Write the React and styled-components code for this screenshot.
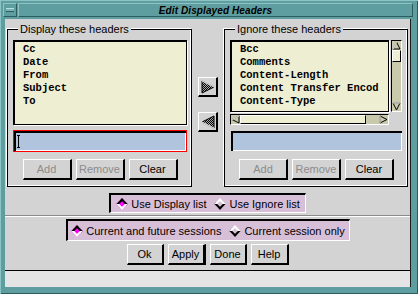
import React from 'react';
import styled, { createGlobalStyle } from 'styled-components';

const TEAL = '#5f9ea0';
const GRAY = '#d3d3d3';
const LIST_BG = '#eeeed2';
const TROUGH = '#c9c9ac';

const GlobalStyle = createGlobalStyle`
  html, body { margin: 0; padding: 0; background: ${TEAL}; }
  body { font-family: "Liberation Sans", Arial, sans-serif; font-size: 11px; color: #000; }
`;

const Frame = styled.div`
  width: 418px;
  height: 294px;
  box-sizing: border-box;
  background: ${TEAL};
  padding: 3px 5px 7px 3px;
  display: flex;
  flex-direction: column;
  gap: 2px;
  box-shadow: inset 1px 1px 0 #8cc4c6, inset -1px -1px 0 #2c5c5e;
`;

const TitleRow = styled.div`
  display: flex;
  height: 14px;
  gap: 1px;
`;

const MenuButton = styled.div`
  width: 14px;
  box-sizing: border-box;
  border-top: 1px solid #8cc4c6;
  border-left: 1px solid #8cc4c6;
  border-bottom: 1px solid #2c5c5e;
  border-right: 1px solid #2c5c5e;
  display: flex;
  align-items: center;
  justify-content: center;

  &::after {
    content: '';
    width: 8px;
    height: 2px;
    background: #7ab4b6;
    border-top: 1px solid #b4e0e2;
    border-bottom: 1px solid #2c5c5e;
  }
`;

const TitleBar = styled.div`
  flex: 1;
  box-sizing: border-box;
  border-top: 1px solid #8cc4c6;
  border-left: 1px solid #8cc4c6;
  border-bottom: 1px solid #2c5c5e;
  border-right: 1px solid #2c5c5e;
  display: flex;
  align-items: center;
  justify-content: center;
  font-style: italic;
  font-weight: bold;
  font-size: 10px;
  letter-spacing: 0.1px;
`;

const Body = styled.div`
  flex: 1;
  margin: 0 2px 0 2px;
  background: ${GRAY};
  display: flex;
  flex-direction: column;
  border-right: 1px solid #1c1c1c;
`;

const Main = styled.div`
  flex: 1;
  padding: 4px 2px 0 2px;
  display: flex;
  flex-direction: column;
  align-items: center;
`;

const TopRow = styled.div`
  display: flex;
  align-self: stretch;
`;

const Group = styled.div`
  position: relative;
  width: ${p => p.$w}px;
  margin-top: 6px;
  box-sizing: border-box;
  border: 1px solid #000;
  box-shadow: -1px -1px 0 #fff, inset -1px -1px 0 #fff;
  padding: 10px 4px 6px 5px;
  display: flex;
  flex-direction: column;
`;

const Legend = styled.span`
  position: absolute;
  top: -7px;
  left: 10px;
  padding: 0 2px;
  background: ${GRAY};
  line-height: 13px;
  white-space: nowrap;
`;

const ListBox = styled.div`
  height: 85px;
  box-sizing: border-box;
  background: ${LIST_BG};
  border: 1px solid #000;
  box-shadow: inset 1px 1px 0 #000, 1px 1px 0 #fff;
  padding: 2px 0 0 9px;
  font-family: "Liberation Mono", "Courier New", monospace;
  font-size: 10.5px;
  font-weight: bold;
  overflow: hidden;
`;

const ListRow = styled.div`
  line-height: 13px;
  height: 13px;
  white-space: nowrap;
`;

const ScrollGrid = styled.div`
  display: grid;
  grid-template-columns: 1fr 11px;
  grid-template-rows: 72px 11px;
  gap: 2px;
  margin-right: 1px;
  & > ${ListBox} { height: 72px; }
`;

const VScroll = styled.div`
  background: ${TROUGH};
  border-top: 1px solid #000;
  border-left: 1px solid #000;
  border-right: 1px solid #fff;
  border-bottom: 1px solid #fff;
  display: flex;
  flex-direction: column;
  align-items: stretch;
`;

const HScroll = styled.div`
  background: ${TROUGH};
  border-top: 1px solid #000;
  border-left: 1px solid #000;
  border-right: 1px solid #fff;
  border-bottom: 1px solid #fff;
  display: flex;
  align-items: stretch;
`;

const ScrollArrow = styled.div`
  width: ${p => p.$horiz ? '9px' : 'auto'};
  height: ${p => p.$horiz ? 'auto' : '9px'};
  display: flex;
  align-items: center;
  justify-content: center;
`;

const Thumb = styled.div`
  background: ${LIST_BG};
  border-right: 1px solid #000;
  border-bottom: 1px solid #000;
  border-top: 1px solid #fff;
  border-left: 1px solid #fff;
  ${p => p.$horiz ? 'width: 124px;' : 'height: 10px;'}
`;

const Spacer = styled.div`
  flex: 1;
`;

const TextInput = styled.div`
  height: 22px;
  margin-top: 5px;
  box-sizing: border-box;
  border: 1px solid ${p => p.$focused ? '#ff0000' : GRAY};
  background: #b0c4de;
  box-shadow: inset 2px 2px 0 #000, inset -1px -1px 0 #fff;
  display: flex;
  align-items: center;
  padding-left: 4px;
`;

const Caret = styled.span`
  position: relative;
  width: 1px;
  height: 13px;
  background: #000;
  &::before, &::after {
    content: '';
    position: absolute;
    left: -1px;
    width: 3px;
    height: 1px;
    background: #000;
  }
  &::before { top: 0; }
  &::after { bottom: 0; }
`;

const ButtonRow = styled.div`
  display: flex;
  justify-content: center;
  gap: 4px;
  margin-top: ${p => p.$mt ?? 7}px;
`;

const Button = styled.div`
  width: ${p => p.$w || 49}px;
  height: 21px;
  box-sizing: border-box;
  border-top: 1px solid #fff;
  border-left: 1px solid #fff;
  border-bottom: 2px solid #000;
  border-right: ${p => p.$default ? 3 : 2}px solid #000;
  display: flex;
  align-items: center;
  justify-content: center;
  color: ${p => p.$disabled ? '#8c8c8c' : '#000'};
`;

const MiddleColumn = styled.div`
  width: 32px;
  display: flex;
  flex-direction: column;
  align-items: center;
  padding-top: 54px;
  gap: 15px;
`;

const ArrowButton = styled.div`
  width: 20px;
  height: 20px;
  box-sizing: border-box;
  border-top: 1px solid #fff;
  border-left: 1px solid #fff;
  border-bottom: 2px solid #000;
  border-right: 2px solid #000;
  display: flex;
  align-items: center;
  justify-content: center;
`;

const RadioBox = styled.div`
  display: flex;
  align-items: center;
  justify-content: center;
  gap: ${p => p.$gap}px;
  width: ${p => p.$w}px;
  height: ${p => p.$h}px;
  margin-top: ${p => p.$mt}px;
  box-sizing: border-box;
  background: #d8bfd8;
  border-top: 2px solid #000;
  border-left: 2px solid #000;
  border-bottom: 1px solid #fff;
  border-right: 1px solid #fff;
`;

const RadioItem = styled.div`
  display: flex;
  align-items: center;
  gap: 4px;
  white-space: nowrap;
`;

const Diamond = styled.span`
  width: 8px;
  height: 8px;
  box-sizing: border-box;
  transform: rotate(45deg);
  background: ${p => p.$on ? '#ff00ff' : '#d8bfd8'};
  border-top: 2px solid ${p => p.$on ? '#000' : '#fff'};
  border-left: 2px solid ${p => p.$on ? '#000' : '#fff'};
  border-bottom: 2px solid ${p => p.$on ? '#fff' : '#000'};
  border-right: 2px solid ${p => p.$on ? '#fff' : '#000'};
  margin: 0 1px 0 2px;
`;

const Separator = styled.div`
  align-self: stretch;
  height: 0;
  margin: 2px -2px 0 -2px;
  border-top: 1px solid #8a8a8a;
  border-bottom: 1px solid #fff;
`;

const BottomStrip = styled.div`
  height: 16px;
  border-top: 1px solid #000;
  background: #e4e4e4;
`;

function Stipple({ dir }) {
  const pts = dir === 'right' ? '1,1 13,7 1,13' : '13,1 1,7 13,13';
  const id = `chk-${dir}`;
  return (
    <svg width="14" height="14" viewBox="0 0 14 14">
      <defs>
        <pattern id={id} width="2" height="2" patternUnits="userSpaceOnUse">
          <rect width="2" height="2" fill="#a8a8a8" />
          <rect width="1" height="1" fill="#000" />
          <rect x="1" y="1" width="1" height="1" fill="#000" />
        </pattern>
      </defs>
      <polygon points={pts} fill={`url(#${id})`} stroke="#000" strokeWidth="1" />
      {dir === 'right'
        ? <line x1="1" y1="1" x2="13" y2="7" stroke="#fff" strokeWidth="1" />
        : <line x1="1" y1="7" x2="13" y2="13" stroke="#fff" strokeWidth="1" />}
    </svg>
  );
}

function SmallArrow({ dir }) {
  const shapes = {
    up: { pts: '4.5,1 8,8 1,8', lt: '1,8 4.5,1' },
    down: { pts: '1,1 8,1 4.5,8', lt: '1,1 8,1' },
    left: { pts: '1,4.5 8,1 8,8', lt: '1,4.5 8,1' },
    right: { pts: '1,1 8,4.5 1,8', lt: '1,8 1,1' },
  };
  const s = shapes[dir];
  return (
    <svg width="9" height="9" viewBox="0 0 9 9">
      <polygon points={s.pts} fill={TROUGH} stroke="#000" strokeWidth="1" />
      <polyline points={s.lt} fill="none" stroke="#fff" strokeWidth="1" />
    </svg>
  );
}

const displayed = ['Cc', 'Date', 'From', 'Subject', 'To'];
const ignored = ['Bcc', 'Comments', 'Content-Length', 'Content Transfer Encod', 'Content-Type'];

function EntryButtons() {
  return (
    <ButtonRow>
      <Button $disabled>Add</Button>
      <Button $disabled>Remove</Button>
      <Button>Clear</Button>
    </ButtonRow>
  );
}

export default function App() {
  return (
    <>
      <GlobalStyle />
      <Frame>
        <TitleRow>
          <MenuButton />
          <TitleBar>Edit Displayed Headers</TitleBar>
        </TitleRow>
        <Body>
          <Main>
            <TopRow>
              <Group $w={185}>
                <Legend>Display these headers</Legend>
                <ListBox>
                  {displayed.map(h => <ListRow key={h}>{h}</ListRow>)}
                </ListBox>
                <TextInput $focused><Caret /></TextInput>
                <EntryButtons />
              </Group>
              <MiddleColumn>
                <ArrowButton><Stipple dir="right" /></ArrowButton>
                <ArrowButton><Stipple dir="left" /></ArrowButton>
              </MiddleColumn>
              <Group $w={184}>
                <Legend>Ignore these headers</Legend>
                <ScrollGrid>
                  <ListBox>
                    {ignored.map(h => <ListRow key={h}>{h}</ListRow>)}
                  </ListBox>
                  <VScroll>
                    <ScrollArrow><SmallArrow dir="up" /></ScrollArrow>
                    <Thumb />
                    <Spacer />
                    <ScrollArrow><SmallArrow dir="down" /></ScrollArrow>
                  </VScroll>
                  <HScroll>
                    <ScrollArrow $horiz><SmallArrow dir="left" /></ScrollArrow>
                    <Thumb $horiz />
                    <Spacer />
                    <ScrollArrow $horiz><SmallArrow dir="right" /></ScrollArrow>
                  </HScroll>
                </ScrollGrid>
                <TextInput />
                <EntryButtons />
              </Group>
            </TopRow>
            <RadioBox $w={197} $h={20} $mt={6} $gap={8}>
              <RadioItem><Diamond $on />Use Display list</RadioItem>
              <RadioItem><Diamond />Use Ignore list</RadioItem>
            </RadioBox>
            <Separator />
            <RadioBox $w={284} $h={22} $mt={2} $gap={8}>
              <RadioItem><Diamond $on />Current and future sessions</RadioItem>
              <RadioItem><Diamond />Current session only</RadioItem>
            </RadioBox>
            <ButtonRow $mt={3}>
              <Button $w={37}>Ok</Button>
              <Button $w={38} $default>Apply</Button>
              <Button $w={37}>Done</Button>
              <Button $w={38}>Help</Button>
            </ButtonRow>
          </Main>
          <BottomStrip />
        </Body>
      </Frame>
    </>
  );
}
